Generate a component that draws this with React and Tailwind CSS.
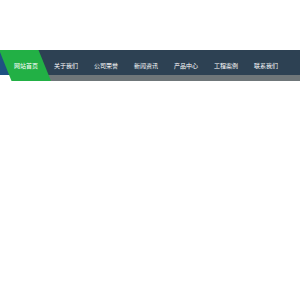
const items = ['网站首页', '关于我们', '公司荣誉', '新闻资讯', '产品中心', '工程案例', '联系我们'];

export default function App() {
  return (
    <div className="h-[300px] w-[300px] overflow-hidden bg-white pt-[50px] font-['Noto_Sans_CJK_SC',sans-serif]">
      <nav className="relative h-[31px] bg-[linear-gradient(to_bottom,#2d4153_25px,#6f7679_25px)]">
        <div className="absolute left-0 top-0 h-[25px] w-[12px] bg-[#1f5282]" />
        <div className="absolute left-0 top-[25px] h-[6px] w-[14px] bg-white" />
        <div className="absolute left-0 top-0 h-[31px] w-[52px] bg-[#22b045] [clip-path:polygon(0px_0px,38.5px_0px,51px_31px,11.5px_31px,0px_2px)]" />
        <ul className="relative flex h-full pl-[6px]">
          {items.map((t) => (
            <li key={t} className="flex h-full w-[40px] items-center justify-center text-[6px] leading-none text-white">
              {t}
            </li>
          ))}
        </ul>
      </nav>
    </div>
  );
}
